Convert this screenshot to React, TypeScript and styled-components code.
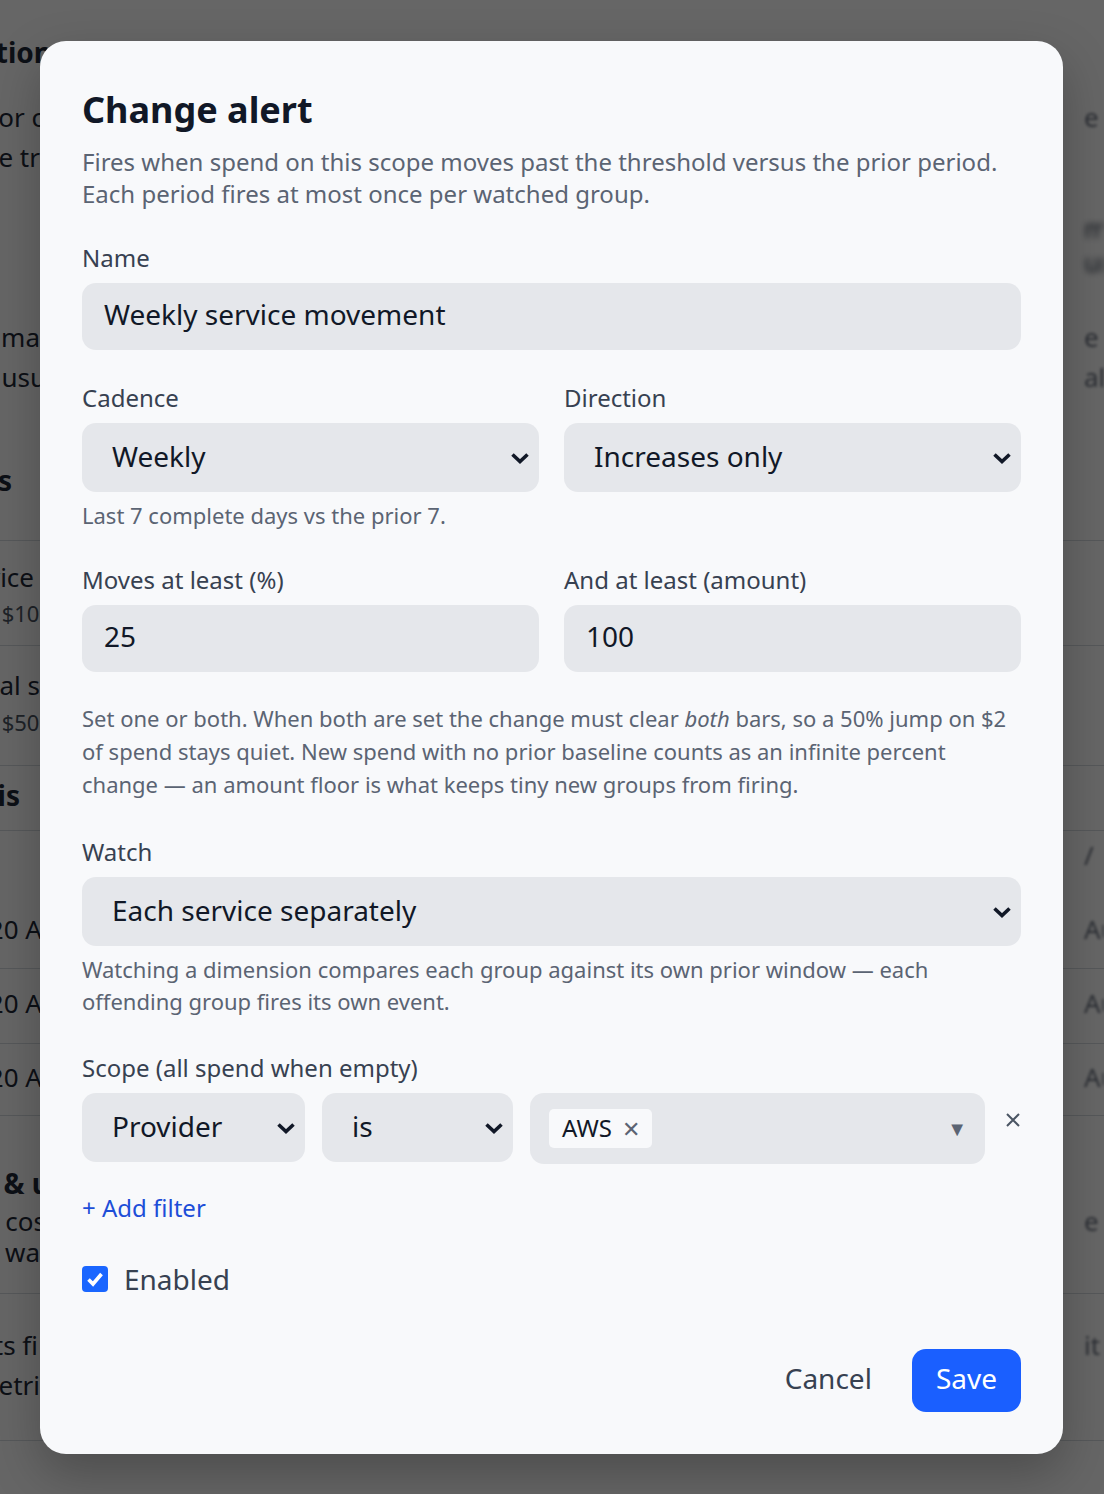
import styled, { createGlobalStyle } from "styled-components";

const GlobalStyle = createGlobalStyle`
  html, body {
    margin: 0;
    padding: 0;
  }
  body {
    font-family: "Noto Sans", "Open Sans", sans-serif;
    background: #ffffff;
  }
  * {
    box-sizing: border-box;
  }
`;

/* ---------- page behind the dialog ---------- */

const Page = styled.div`
  position: fixed;
  inset: 0;
  overflow: hidden;
  background: #ffffff;
  color: #1f2937;
`;

const PageRow = styled.div<{ $gap: number }>`
  display: flex;
  justify-content: space-between;
  align-items: center;
  height: 36px;
  margin-top: ${(p) => p.$gap}px;
`;

const PageLine = styled.div<{ $gap: number }>`
  height: 1px;
  background: #d8dbe0;
  margin-top: ${(p) => p.$gap}px;
`;

const LeftCell = styled.div<{ $end: number }>`
  width: ${(p) => p.$end}px;
  display: flex;
  justify-content: flex-end;
  overflow: hidden;
  white-space: nowrap;
`;

const PageText = styled.span<{ $bold?: boolean; $small?: boolean }>`
  font-size: ${(p) => (p.$bold ? 28 : p.$small ? 22 : 26)}px;
  font-weight: ${(p) => (p.$bold ? 700 : 400)};
  color: ${(p) => (p.$small ? "#4b5563" : "#1f2937")};
  line-height: 36px;
`;

const RightCell = styled.div<{ $dark?: boolean }>`
  width: 20px;
  white-space: nowrap;
  overflow: hidden;
  font-size: 26px;
  color: ${(p) => (p.$dark ? "#374151" : "#6b7280")};
  filter: blur(${(p) => (p.$dark ? 3 : 1.5)}px);
`;

type BgItem =
  | {
      kind: "text";
      y: number;
      text?: string;
      end?: number;
      bold?: boolean;
      small?: boolean;
      right?: string;
      dark?: boolean;
    }
  | { kind: "line"; y: number };

const bgItems: BgItem[] = [
  { kind: "text", y: 52, text: "Notification", end: 52, bold: true },
  { kind: "text", y: 117, text: "Email or c", end: 44, right: "e" },
  { kind: "text", y: 157, text: "Change tr", end: 40 },
  { kind: "text", y: 228, right: "mu", dark: true },
  { kind: "text", y: 262, right: "un", dark: true },
  { kind: "text", y: 337, text: "Estimated ma", end: 40, right: "e" },
  { kind: "text", y: 377, text: "unusu", end: 46, right: "al" },
  { kind: "text", y: 480, text: "Budgets", end: 12, bold: true },
  { kind: "line", y: 540 },
  { kind: "text", y: 577, text: "Per-service", end: 34 },
  { kind: "text", y: 613, text: "$100", end: 52, small: true },
  { kind: "line", y: 645 },
  { kind: "text", y: 685, text: "Total s", end: 40 },
  { kind: "text", y: 722, text: "$500", end: 52, small: true },
  { kind: "line", y: 765 },
  { kind: "text", y: 795, text: "Analysis", end: 20, bold: true },
  { kind: "line", y: 830 },
  { kind: "text", y: 855, right: "/" },
  { kind: "text", y: 929, text: "Mar 20 A", end: 42, right: "Au" },
  { kind: "line", y: 968 },
  { kind: "text", y: 1003, text: "Mar 20 A", end: 42, right: "Au" },
  { kind: "line", y: 1043 },
  { kind: "text", y: 1077, text: "Mar 20 A", end: 42, right: "Au" },
  { kind: "line", y: 1115 },
  { kind: "text", y: 1183, text: "Cost & u", end: 50, bold: true },
  { kind: "text", y: 1221, text: "Daily cos", end: 46, right: "e" },
  { kind: "text", y: 1252, text: "tracking wa", end: 40 },
  { kind: "line", y: 1293 },
  { kind: "text", y: 1345, text: "Alerts fi", end: 38, right: "it" },
  { kind: "text", y: 1385, text: "Metri", end: 40 },
  { kind: "line", y: 1440 },
];

const BackgroundPage = () => {
  let bottom = 0;
  return (
    <Page>
      {bgItems.map((item, i) => {
        if (item.kind === "line") {
          const gap = item.y - bottom;
          bottom = item.y + 1;
          return <PageLine key={i} $gap={gap} />;
        }
        const gap = item.y - 18 - bottom;
        bottom = item.y + 18;
        return (
          <PageRow key={i} $gap={gap}>
            <LeftCell $end={item.end ?? 0}>
              {item.text && (
                <PageText $bold={item.bold} $small={item.small}>
                  {item.text}
                </PageText>
              )}
            </LeftCell>
            <RightCell $dark={item.dark}>{item.right}</RightCell>
          </PageRow>
        );
      })}
    </Page>
  );
};

/* ---------- dialog ---------- */

const Overlay = styled.div`
  position: fixed;
  inset: 0;
  background: rgba(0, 0, 0, 0.6);
  display: flex;
  justify-content: flex-start;
  align-items: flex-start;
  padding: 41px 0 0 40px;
`;

const Dialog = styled.div`
  width: 1023px;
  background: #f8f9fb;
  border-radius: 26px;
  padding: 47px 42px 42px;
  box-shadow: 0 20px 50px rgba(0, 0, 0, 0.25);
  display: flex;
  flex-direction: column;
`;

const Title = styled.h2`
  margin: 0;
  font-size: 36px;
  line-height: 44px;
  font-weight: 700;
  color: #111827;
`;

const Intro = styled.p`
  margin: 14px 0 0;
  font-size: 24px;
  line-height: 32px;
  color: #5b6473;
`;

const Section = styled.div<{ $top: number }>`
  margin-top: ${(p) => p.$top}px;
  display: flex;
  flex-direction: column;
`;

const Columns = styled.div`
  display: grid;
  grid-template-columns: 1fr 1fr;
  column-gap: 25px;
`;

const Label = styled.label`
  display: block;
  font-size: 24px;
  line-height: 32px;
  color: #374151;
  margin-bottom: 9px;
`;

const TextInput = styled.div`
  height: 67px;
  display: flex;
  align-items: center;
  padding: 0 22px 5px;
  background: #e5e7eb;
  border-radius: 14px;
  font-size: 28px;
  color: #111827;
`;

const SelectBox = styled.div`
  height: 69px;
  display: flex;
  align-items: center;
  justify-content: space-between;
  padding: 0 9px 0 30px;
  background: #e5e7eb;
  border-radius: 14px;
  font-size: 28px;
  color: #111827;
`;

const SelectValue = styled.span`
  margin-bottom: 4px;
`;

const Hint = styled.p`
  margin: 7px 0 0;
  font-size: 22px;
  line-height: 32px;
  color: #5b6473;
`;

const Note = styled.p`
  margin: 0;
  font-size: 22px;
  line-height: 33px;
  color: #5b6473;
`;

const ScopeRow = styled.div`
  display: grid;
  grid-template-columns: 223px 191px 455px 1fr;
  column-gap: 17px;
  align-items: start;
`;

const MultiSelect = styled.div`
  height: 71px;
  display: flex;
  align-items: center;
  justify-content: space-between;
  padding: 0 18px 0 19px;
  background: #e5e7eb;
  border-radius: 14px;
`;

const Chip = styled.span`
  display: inline-flex;
  align-items: center;
  gap: 10px;
  height: 39px;
  padding: 0 12px 2px 13px;
  background: #f8f9fb;
  border-radius: 5px;
  font-size: 24px;
  color: #111827;
`;

const ChipRemove = styled.span`
  color: #5b6473;
  font-size: 22px;
`;

const Caret = styled.span`
  color: #5b6473;
  font-size: 20px;
`;

const RemoveRow = styled.button`
  border: none;
  background: none;
  padding: 19px 0 0;
  margin: 0;
  display: flex;
  justify-content: flex-end;
  color: #4b5563;
  cursor: pointer;
`;

const AddLink = styled.a`
  font-size: 24px;
  line-height: 32px;
  color: #1d4ed8;
  text-decoration: none;
`;

const CheckRow = styled.label`
  display: flex;
  align-items: center;
  gap: 16px;
  font-size: 28px;
  line-height: 32px;
  color: #374151;
`;

const CheckBox = styled.span`
  width: 26px;
  height: 26px;
  border-radius: 4px;
  background: #1a66ff;
  display: flex;
  align-items: center;
  justify-content: center;
`;

const Footer = styled.div`
  margin-top: 54px;
  display: flex;
  justify-content: flex-end;
  align-items: center;
  gap: 20px;
`;

const Button = styled.button<{ $primary?: boolean }>`
  height: 63px;
  padding: 0 ${(p) => (p.$primary ? 24 : 20)}px 5px;
  border: none;
  border-radius: 14px;
  font-family: inherit;
  font-size: 28px;
  background: ${(p) => (p.$primary ? "#1a5fff" : "transparent")};
  color: ${(p) => (p.$primary ? "#ffffff" : "#374151")};
  cursor: pointer;
`;

const Chevron = () => (
  <svg width="20" height="12" viewBox="0 0 20 12" fill="none">
    <path d="M2.5 2.5 10 9.5 17.5 2.5" stroke="#111827" strokeWidth="3.6" />
  </svg>
);

const Cross = () => (
  <svg width="16" height="16" viewBox="0 0 16 16" fill="none">
    <path d="M2 2 14 14M14 2 2 14" stroke="#4b5563" strokeWidth="2" />
  </svg>
);

const Select = ({ value }: { value: string }) => (
  <SelectBox>
    <SelectValue>{value}</SelectValue>
    <Chevron />
  </SelectBox>
);

export default function App() {
  return (
    <>
      <GlobalStyle />
      <BackgroundPage />
      <Overlay>
        <Dialog>
          <Title>Change alert</Title>
          <Intro>
            Fires when spend on this scope moves past the threshold versus the prior period.
            <br />
            Each period fires at most once per watched group.
          </Intro>

          <Section $top={32}>
            <Label>Name</Label>
            <TextInput>Weekly service movement</TextInput>
          </Section>

          <Section $top={32}>
            <Columns>
              <div>
                <Label>Cadence</Label>
                <Select value="Weekly" />
                <Hint>Last 7 complete days vs the prior 7.</Hint>
              </div>
              <div>
                <Label>Direction</Label>
                <Select value="Increases only" />
              </div>
            </Columns>
          </Section>

          <Section $top={33}>
            <Columns>
              <div>
                <Label>Moves at least (%)</Label>
                <TextInput>25</TextInput>
              </div>
              <div>
                <Label>And at least (amount)</Label>
                <TextInput>100</TextInput>
              </div>
            </Columns>
          </Section>

          <Section $top={30}>
            <Note>
              Set one or both. When both are set the change must clear <em>both</em> bars, so a 50% jump on $2
              of spend stays quiet. New spend with no prior baseline counts as an infinite percent change — an
              amount floor is what keeps tiny new groups from firing.
            </Note>
          </Section>

          <Section $top={35}>
            <Label>Watch</Label>
            <Select value="Each service separately" />
            <Hint>
              Watching a dimension compares each group against its own prior window — each offending group
              fires its own event.
            </Hint>
          </Section>

          <Section $top={35}>
            <Label>Scope (all spend when empty)</Label>
            <ScopeRow>
              <Select value="Provider" />
              <Select value="is" />
              <MultiSelect>
                <Chip>
                  AWS <ChipRemove>✕</ChipRemove>
                </Chip>
                <Caret>▼</Caret>
              </MultiSelect>
              <RemoveRow aria-label="Remove filter">
                <Cross />
              </RemoveRow>
            </ScopeRow>
          </Section>

          <Section $top={28}>
            <AddLink href="#">+ Add filter</AddLink>
          </Section>

          <Section $top={39}>
            <CheckRow>
              <CheckBox>
                <svg width="20" height="20" viewBox="0 0 20 20" fill="none">
                  <path d="M3.5 10.5 8 15 16.5 5" stroke="#ffffff" strokeWidth="3.6" />
                </svg>
              </CheckBox>
              Enabled
            </CheckRow>
          </Section>

          <Footer>
            <Button>Cancel</Button>
            <Button $primary>Save</Button>
          </Footer>
        </Dialog>
      </Overlay>
    </>
  );
}
